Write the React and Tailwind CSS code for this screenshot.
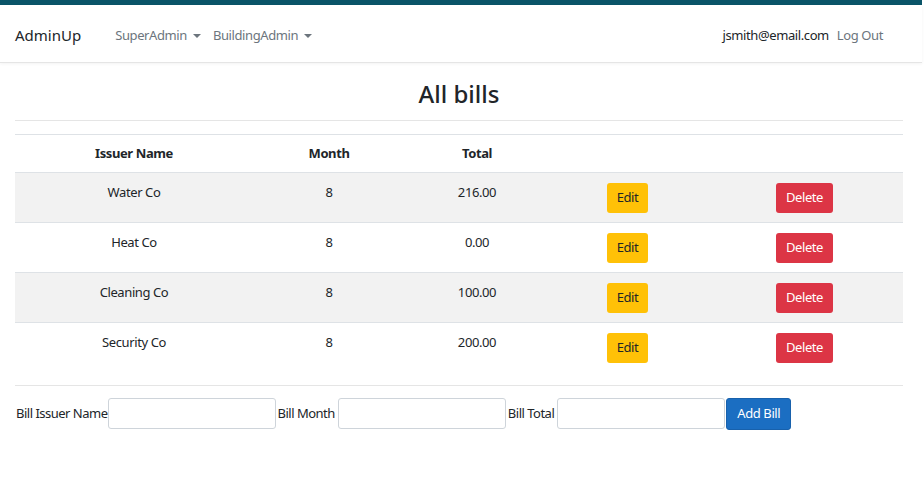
import React from 'react';

const bills = [
  { name: 'Water Co', month: 8, total: '216.00' },
  { name: 'Heat Co', month: 8, total: '0.00' },
  { name: 'Cleaning Co', month: 8, total: '100.00' },
  { name: 'Security Co', month: 8, total: '200.00' },
];

function Caret() {
  return <span className="ml-[6px] inline-block align-middle border-x-[4px] border-t-[4px] border-x-transparent border-t-[#6c757d]" />;
}

export default function App() {
  return (
    <div className="min-h-screen bg-white text-[#212529] text-[13px] tracking-[-0.4px]" style={{ fontFamily: '"Noto Sans", "Open Sans", sans-serif' }}>
      <div className="h-[5px] bg-[#0a5468] mr-[2px]" />
      <nav className="h-[58px] mr-[2px] flex items-center justify-between px-[15px] pt-[4px] border-b border-[#e5e5e5] shadow-[0_1px_3px_rgba(0,0,0,0.05)]">
        <div className="flex items-center">
          <span className="text-[15px] tracking-normal text-[#212529] mr-[34px]">AdminUp</span>
          <span className="text-[#6c757d] mr-[12px]">SuperAdmin<Caret /></span>
          <span className="text-[#6c757d]">BuildingAdmin<Caret /></span>
        </div>
        <div className="flex items-center mr-[24px]">
          <span className="text-[#212529] mr-[8px]">jsmith@email.com</span>
          <span className="text-[#6c757d]">Log Out</span>
        </div>
      </nav>

      <div className="pl-[15px] pr-[21px]">
        <h1 className="text-[24px] font-medium text-center leading-[30px] mt-[16px] mb-[11px] tracking-normal">All bills</h1>
        <hr className="border-[#e5e5e5] mb-[13px]" />

        <table className="w-full border-collapse table-fixed">
          <colgroup>
            <col className="w-[238px]" />
            <col className="w-[152px]" />
            <col className="w-[144px]" />
            <col className="w-[157px]" />
            <col className="w-[197px]" />
          </colgroup>
          <thead>
            <tr className="border-t border-[#dee2e6]">
              <th className="h-[38px] font-bold text-center">Issuer Name</th>
              <th className="font-bold text-center">Month</th>
              <th className="font-bold text-center">Total</th>
              <th />
              <th />
            </tr>
          </thead>
          <tbody>
            {bills.map((b, i) => (
              <tr key={b.name} className={`border-t border-[#dee2e6] ${i % 2 === 0 ? 'bg-[#f2f2f2]' : 'bg-white'}`}>
                <td className="h-[50px] align-top pt-[10px] text-center">{b.name}</td>
                <td className="align-top pt-[10px] text-center">{b.month}</td>
                <td className="align-top pt-[10px] text-center">{b.total}</td>
                <td className="align-top pt-[10px] text-center">
                  <button className="h-[30px] px-[10px] rounded-[3px] bg-[#ffc107] text-[#212529]">Edit</button>
                </td>
                <td className="align-top pt-[10px] text-center">
                  <button className="h-[30px] px-[10px] rounded-[3px] bg-[#dc3545] text-white">Delete</button>
                </td>
              </tr>
            ))}
          </tbody>
        </table>

        <hr className="border-[#e5e5e5] mt-[12px]" />
        <form className="flex items-center mt-[12px] ml-[1px] tracking-[-0.5px]" onSubmit={e => e.preventDefault()}>
          <label className="mr-[0px]">Bill Issuer Name</label>
          <input className="w-[168px] h-[31px] border border-[#ced4da] rounded-[3px] mr-[2px]" />
          <label className="mr-[3px]">Bill Month</label>
          <input className="w-[168px] h-[31px] border border-[#ced4da] rounded-[3px] mr-[2px]" />
          <label className="mr-[3px]">Bill Total</label>
          <input className="w-[168px] h-[31px] border border-[#ced4da] rounded-[3px] mr-[1px]" />
          <button className="h-[32px] px-[10px] rounded-[3px] bg-[#1b6ec2] border border-[#1861ac] text-white tracking-[-0.4px]">Add Bill</button>
        </form>
      </div>
    </div>
  );
}
